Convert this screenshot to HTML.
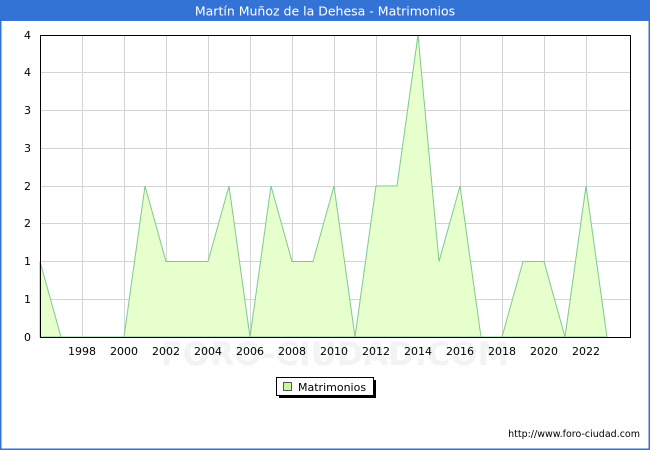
<!DOCTYPE html>
<html><head><meta charset="utf-8"><style>
html,body{margin:0;padding:0;width:650px;height:450px;overflow:hidden;background:#fff}
</style></head><body>
<svg width="650" height="450" xmlns="http://www.w3.org/2000/svg" font-family="DejaVu Sans, Liberation Sans, sans-serif">
<rect x="0" y="0" width="650" height="450" fill="#fff"/>
<rect x="0.5" y="0.5" width="649" height="449" fill="none" stroke="#3473d6" stroke-width="2"/>
<rect x="0" y="0" width="650" height="21" fill="#3473d6"/>
<text x="325" y="15.5" fill="#fff" font-size="12.5" text-anchor="middle">Martín Muñoz de la Dehesa - Matrimonios</text>
<g stroke="#d4d4d4" stroke-width="1">
<line x1="40" y1="299.5" x2="630" y2="299.5"/><line x1="40" y1="261.5" x2="630" y2="261.5"/>
<line x1="40" y1="223.5" x2="630" y2="223.5"/><line x1="40" y1="186.5" x2="630" y2="186.5"/>
<line x1="40" y1="148.5" x2="630" y2="148.5"/><line x1="40" y1="110.5" x2="630" y2="110.5"/>
<line x1="40" y1="72.5" x2="630" y2="72.5"/>
<line x1="82.5" y1="35" x2="82.5" y2="337"/><line x1="124.5" y1="35" x2="124.5" y2="337"/>
<line x1="166.5" y1="35" x2="166.5" y2="337"/><line x1="208.5" y1="35" x2="208.5" y2="337"/>
<line x1="250.5" y1="35" x2="250.5" y2="337"/><line x1="292.5" y1="35" x2="292.5" y2="337"/>
<line x1="334.5" y1="35" x2="334.5" y2="337"/><line x1="376.5" y1="35" x2="376.5" y2="337"/>
<line x1="418.5" y1="35" x2="418.5" y2="337"/><line x1="460.5" y1="35" x2="460.5" y2="337"/>
<line x1="502.5" y1="35" x2="502.5" y2="337"/><line x1="544.5" y1="35" x2="544.5" y2="337"/>
<line x1="586.5" y1="35" x2="586.5" y2="337"/>
</g>
<text x="335" y="365" fill="#f3f3f3" font-size="32" text-anchor="middle" font-weight="bold">FORO-CIUDAD.COM</text>
<polygon fill="#e6ffcc" stroke="#7fc98f" stroke-width="1" points="40,337 40,261.5 61,337 82,337 103,337 124,337 145,186 166,261.5 187,261.5 208,261.5 229,186 250,337 271,186 292,261.5 313,261.5 334,186 355,337 376,186 397,186 418,35 439,261.5 460,186 481,337 502,337 523,261.5 544,261.5 565,337 586,186 607,337"/>
<rect x="40.5" y="35.5" width="590" height="302" fill="none" stroke="#000" stroke-width="1"/>
<g font-size="11" fill="#000" text-anchor="end">
<text x="31" y="341">0</text><text x="31" y="303">1</text><text x="31" y="265">1</text>
<text x="31" y="227">2</text><text x="31" y="190">2</text><text x="31" y="152">3</text>
<text x="31" y="114">3</text><text x="31" y="76">4</text><text x="31" y="39">4</text>
</g>
<g font-size="11" fill="#000" text-anchor="middle">
<text x="82" y="355">1998</text><text x="124" y="355">2000</text><text x="166" y="355">2002</text>
<text x="208" y="355">2004</text><text x="250" y="355">2006</text><text x="292" y="355">2008</text>
<text x="334" y="355">2010</text><text x="376" y="355">2012</text><text x="418" y="355">2014</text>
<text x="460" y="355">2016</text><text x="502" y="355">2018</text><text x="544" y="355">2020</text>
<text x="586" y="355">2022</text>
</g>
<rect x="279" y="380" width="97" height="18" fill="#000"/>
<rect x="276.5" y="377.5" width="97" height="18" fill="#fff" stroke="#000" stroke-width="1"/>
<rect x="283.5" y="382.5" width="8" height="8" fill="#ccf5a0" stroke="#555" stroke-width="1"/>
<text x="298" y="391" font-size="11" fill="#000">Matrimonios</text>
<text x="640" y="437" font-size="9.5" fill="#000" text-anchor="end">http://www.foro-ciudad.com</text>
</svg>
</body></html>
